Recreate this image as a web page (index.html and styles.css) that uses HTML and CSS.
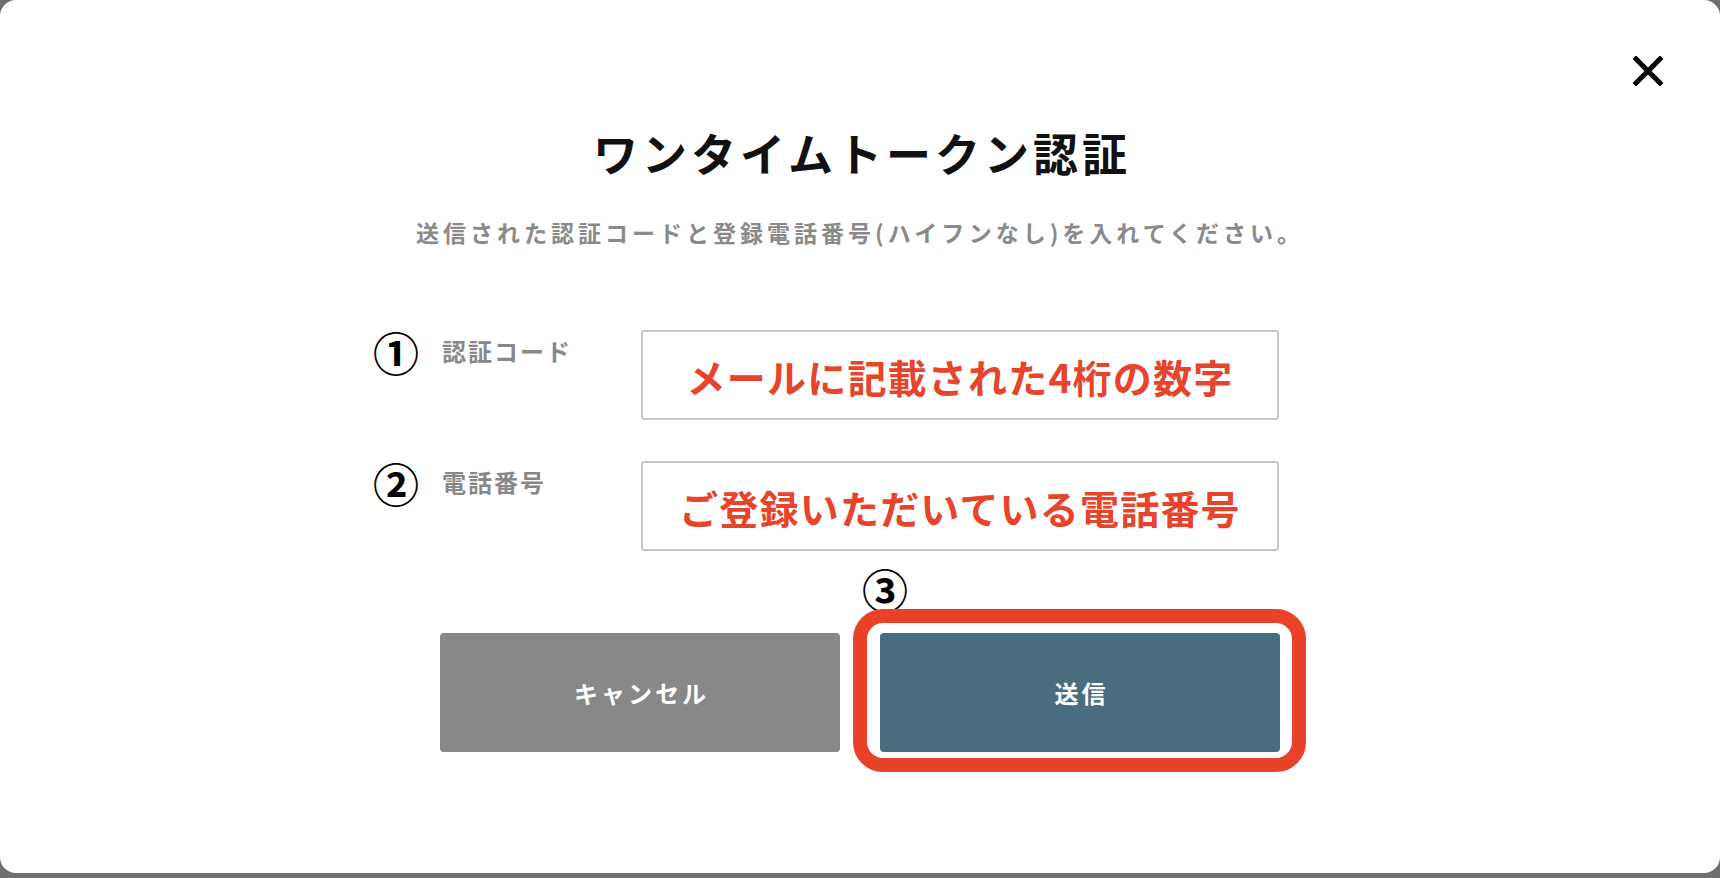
FILE: index.html
```html
<!DOCTYPE html>
<html lang="ja">
<head>
<meta charset="utf-8">
<title>ワンタイムトークン認証</title>
<link rel="stylesheet" href="styles.css">
</head>
<body>
<div class="modal">
  <button class="close" aria-label="閉じる">
    <svg width="30" height="30" viewBox="0 0 30 30"><path d="M3 3 L27 27 M27 3 L3 27" stroke="#000" stroke-width="5" stroke-linecap="square" fill="none"/></svg>
  </button>
  <h1 class="title">ワンタイムトークン認証</h1>
  <p class="lead">送信された認証コードと登録電話番号(ハイフンなし)を入れてください。</p>
  <div class="form">
    <div class="row">
      <span class="mark">①</span>
      <span class="label">認証コード</span>
      <div class="field">メールに記載された4桁の数字</div>
    </div>
    <div class="row">
      <span class="mark">②</span>
      <span class="label">電話番号</span>
      <div class="field">ご登録いただいている電話番号</div>
    </div>
  </div>
  <div class="actions">
    <button class="btn btn-cancel">キャンセル</button>
    <div class="send-wrap">
      <span class="mark step">③</span>
      <span class="ring"></span>
      <button class="btn btn-send">送信</button>
    </div>
  </div>
</div>
</body>
</html>
```
FILE: styles.css
```css
html, body {
  margin: 0;
  padding: 0;
}
body {
  background: #6f6f6f;
  font-family: "Noto Sans CJK JP", "Noto Sans", sans-serif;
  width: 1720px;
  height: 878px;
  overflow: hidden;
}
.modal {
  position: relative;
  box-sizing: border-box;
  width: 1720px;
  height: 873px;
  background: #fff;
  border-radius: 16px;
  padding-top: 127px;
}
.close {
  position: absolute;
  top: 56px;
  right: 57px;
  width: 30px;
  height: 30px;
  padding: 0;
  border: 0;
  background: none;
  line-height: 0;
}
.title {
  margin: 0;
  text-align: center;
  font-size: 45px;
  line-height: 52px;
  font-weight: 700;
  letter-spacing: 4px;
  color: #111;
  padding-left: 4px;
}
.lead {
  margin: 35px 0 0;
  text-align: center;
  font-size: 23px;
  line-height: 36px;
  font-weight: 700;
  letter-spacing: 4px;
  color: #8a8a8a;
}
.form {
  width: 904px;
  padding-right: 66px;
  margin: 80px auto 0;
  display: flex;
  flex-direction: column;
  gap: 41px;
}
.row {
  display: flex;
  align-items: flex-start;
}
.mark {
  width: 67px;
  font-size: 46px;
  line-height: 36px;
  font-weight: 700;
  color: #000;
  font-family: "Noto Sans CJK JP", sans-serif;
  margin-top: 3px;
  margin-left: -2px;
  margin-right: 2px;
}
.label {
  width: 199px;
  font-size: 24px;
  line-height: 36px;
  font-weight: 700;
  letter-spacing: 2px;
  color: #888;
  margin-top: 3px;
}
.field {
  box-sizing: border-box;
  width: 638px;
  height: 90px;
  border: 2px solid #c6c8c8;
  border-radius: 3px;
  display: flex;
  align-items: center;
  justify-content: center;
  font-size: 39px;
  font-weight: 700;
  letter-spacing: 1.2px;
  color: #e8432b;
  padding-top: 2px;
}
.actions {
  margin-top: 82px;
  display: flex;
  justify-content: center;
  gap: 40px;
}
.btn {
  width: 400px;
  height: 119px;
  border: 0;
  border-radius: 4px;
  color: #fff;
  font-family: "Noto Sans CJK JP", sans-serif;
  font-size: 24px;
  font-weight: 700;
  letter-spacing: 3px;
  padding: 0 0 0 3px;
}
.btn-cancel {
  background: #888888;
}
.btn-send {
  background: #486d7f;
  display: block;
}
.send-wrap {
  position: relative;
}
.ring {
  position: absolute;
  left: -27px;
  top: -24px;
  width: 453px;
  height: 163px;
  box-sizing: border-box;
  border: 14px solid #e94228;
  border-radius: 30px;
}
.step {
  position: absolute;
  left: -18px;
  top: -63px;
  width: auto;
  margin: 0;
}
```
